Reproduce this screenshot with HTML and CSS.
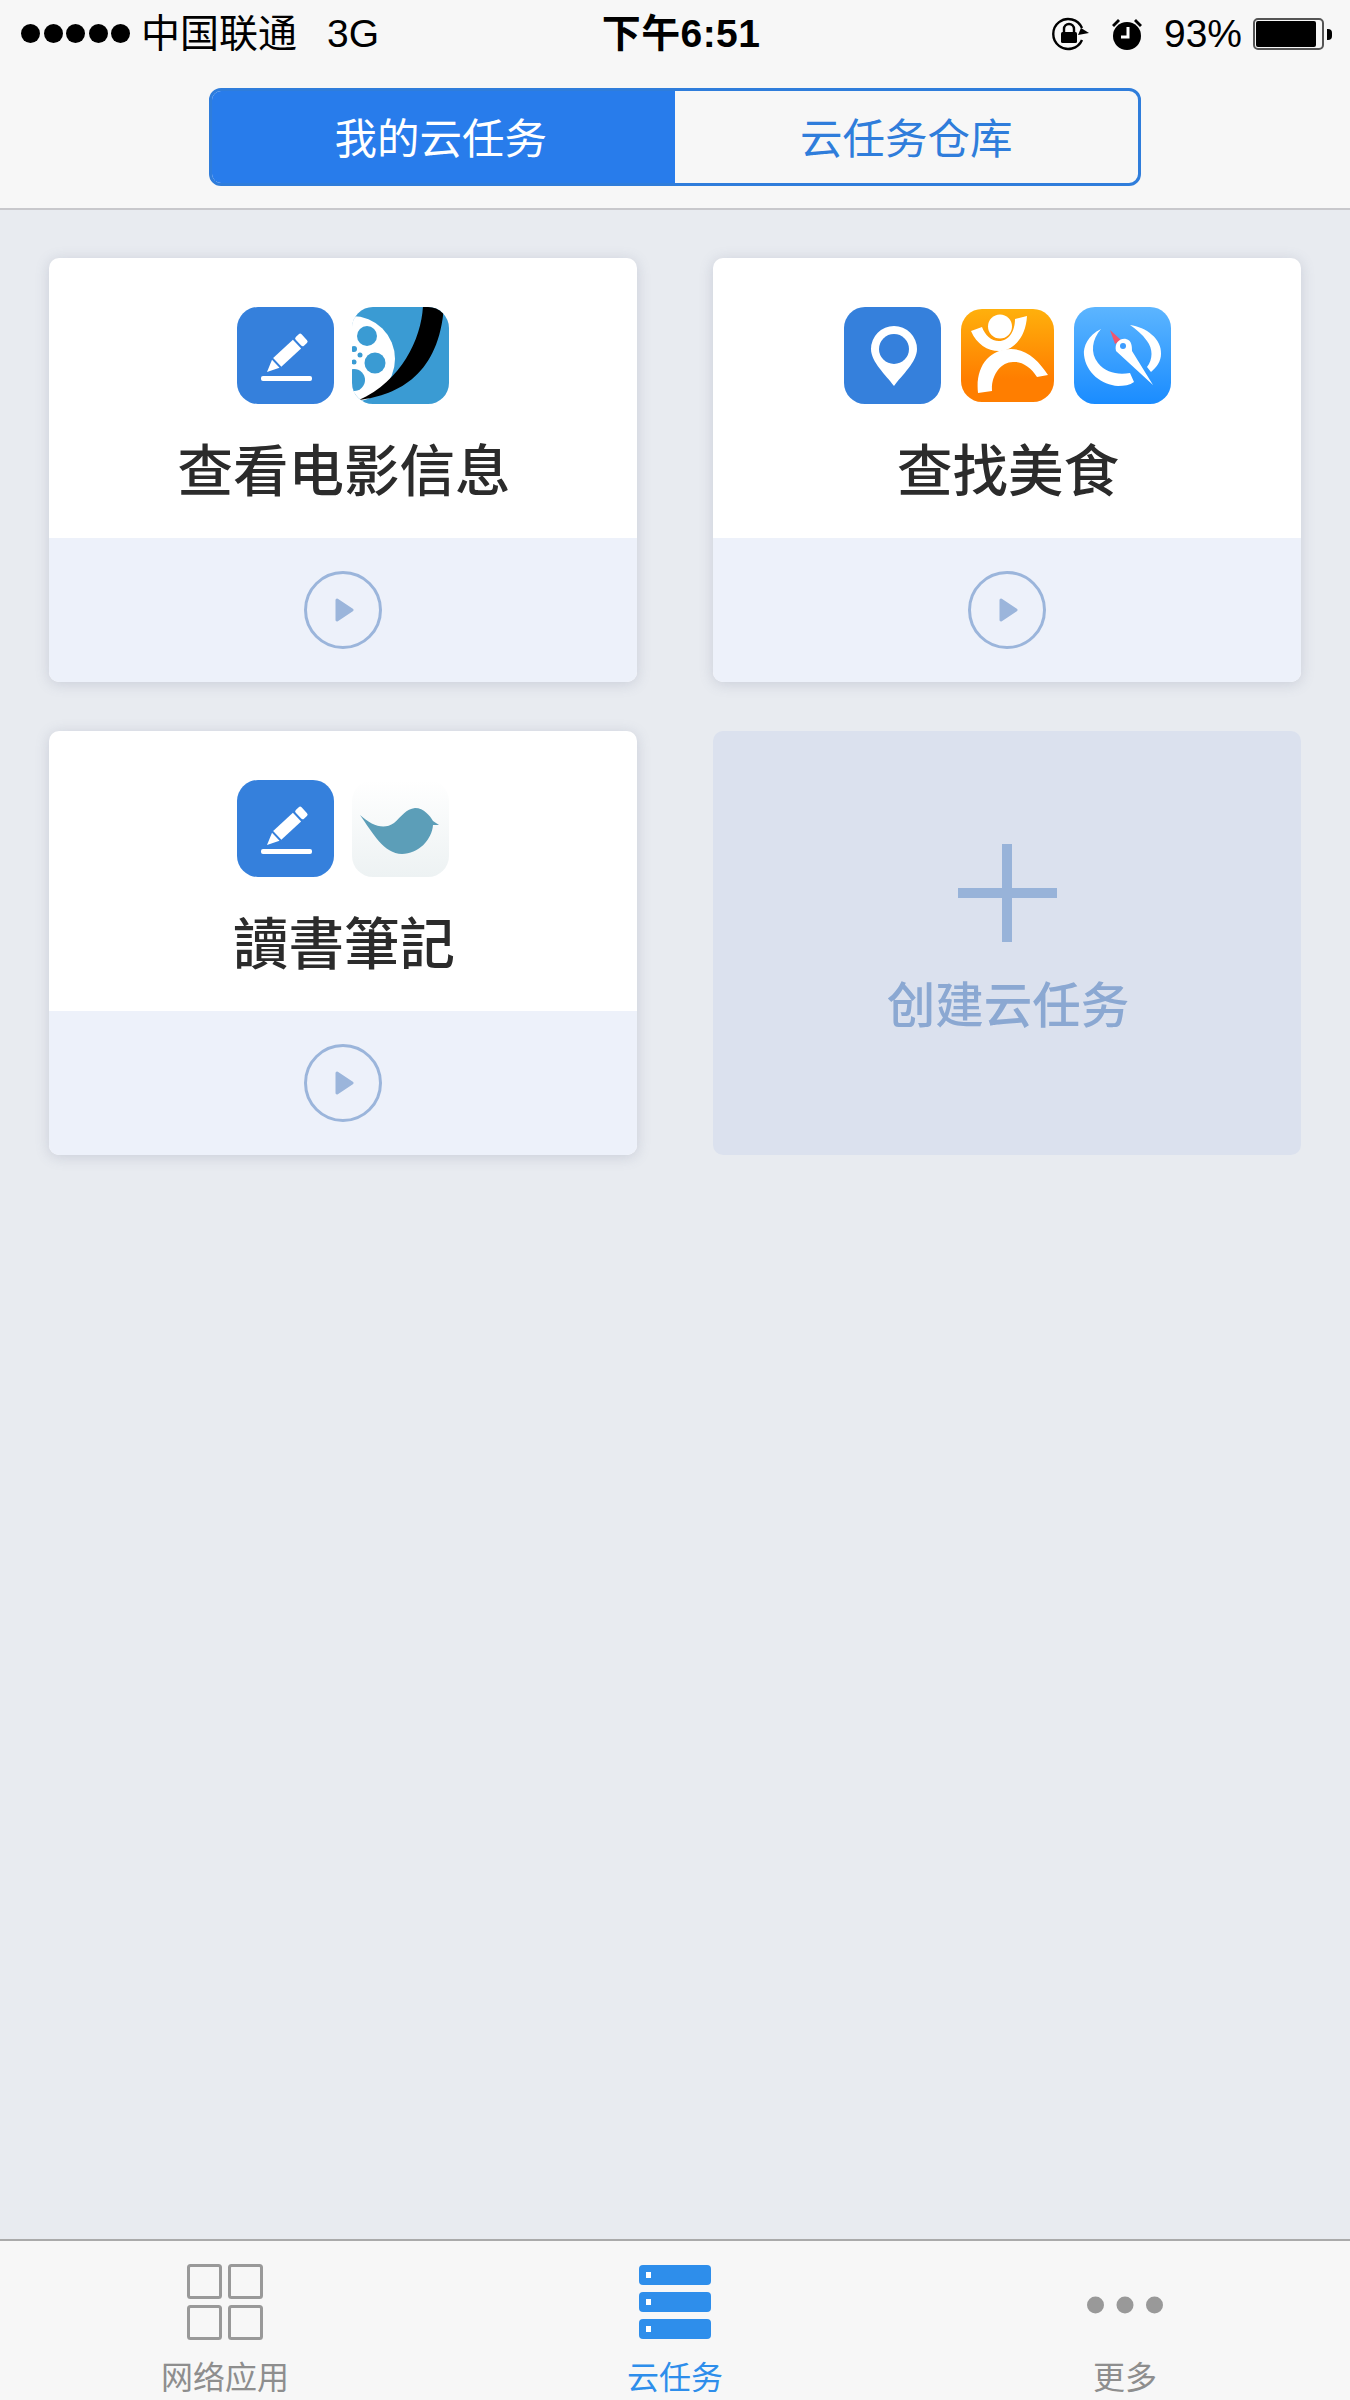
FILE: index.html
```html
<!DOCTYPE html>
<html lang="zh-CN">
  <head>
    <meta charset="UTF-8" />
    <meta name="viewport" content="width=device-width, initial-scale=1.0" />
    <title>云任务</title>
    <link rel="stylesheet" href="styles.css">
  </head>
  <body>
    <div class="app">
      <header class="top">
        <div class="status">
          <div class="status-left">
            <span class="signal"><i></i><i></i><i></i><i></i><i></i></span>
            <span class="carrier">中国联通</span>
            <span class="network">3G</span>
          </div>
          <div class="clock">下午6:51</div>
          <div class="status-right">
            <svg class="lock-icon" viewBox="0 0 38 34" width="38" height="34">
              <path d="M30 23 A15 15 0 1 1 30 11" fill="none" stroke="#000" stroke-width="2.4" />
              <path d="M29 11 L37 16 L26 18 Z" fill="#000" />
              <path d="M12 15 V12 A5 5 0 0 1 22 12 V15" fill="none" stroke="#000" stroke-width="2.4" />
              <rect x="9" y="15" width="16" height="11" rx="1.5" fill="#000" />
            </svg>
            <svg class="alarm-icon" viewBox="0 0 32 33" width="32" height="33">
              <circle cx="16" cy="18" r="14" fill="#000" />
              <path d="M17 9 V19 H10" fill="none" stroke="#fff" stroke-width="3" />
              <path d="M1 7 L7 1 L9 3 L3 9 Z M31 7 L25 1 L23 3 L29 9 Z" fill="#000" />
            </svg>
            <span class="battery-text">93%</span>
            <span class="battery"><span class="battery-fill"></span></span>
            <span class="battery-tip"></span>
          </div>
        </div>
        <div class="segment">
          <div class="segment-item active">我的云任务</div>
          <div class="segment-item">云任务仓库</div>
        </div>
      </header>

      <main class="tasks">
        <section class="card">
          <div class="card-body">
            <div class="apps">
              <svg class="app-icon" viewBox="0 0 97 97">
                <rect width="97" height="97" rx="21" fill="#3580dc" />
                <g transform="translate(30 65) rotate(47)" fill="#fff">
                  <path d="M0 0 L-5.5 -12 H5.5 Z" />
                  <rect x="-6" y="-41" width="12" height="27" />
                  <rect x="-6" y="-51" width="12" height="8" rx="2" />
                </g>
                <rect x="24" y="69" width="51" height="5" rx="2" fill="#fff" />
              </svg>
              <svg class="app-icon" viewBox="0 0 97 97">
                <defs>
                  <clipPath id="film-clip"><rect width="97" height="97" rx="21" /></clipPath>
                </defs>
                <g clip-path="url(#film-clip)">
                  <rect width="97" height="97" fill="#3a9bd3" />
                  <circle cx="0" cy="52" r="43" fill="#fff" />
                  <rect x="-1" y="0" width="4" height="97" fill="#fff" />
                  <circle cx="15" cy="29" r="10" fill="#3a9bd3" />
                  <circle cx="23" cy="56" r="10.5" fill="#3a9bd3" />
                  <circle cx="2" cy="73" r="11" fill="#3a9bd3" />
                  <circle cx="2" cy="42" r="3" fill="#3a9bd3" />
                  <circle cx="8" cy="48" r="2.5" fill="#3a9bd3" />
                  <circle cx="2" cy="55" r="2.5" fill="#3a9bd3" />
                  <path d="M71 -2 C70 30 50 74 7 93 C48 88 88 66 92 -2 Z" fill="#000" />
                </g>
              </svg>
            </div>
            <h2 class="card-title">查看电影信息</h2>
          </div>
          <div class="card-foot">
            <span class="play">
              <svg class="play-arrow" viewBox="0 0 19 24" width="19" height="24"><path d="M2 2 L17 12 L2 22 Z" fill="#9bb5db" stroke="#9bb5db" stroke-width="3" stroke-linejoin="round" /></svg>
            </span>
          </div>
        </section>

        <section class="card">
          <div class="card-body">
            <div class="apps wide">
              <svg class="app-icon" viewBox="0 0 97 97">
                <rect width="97" height="97" rx="21" fill="#3580dc" />
                <path d="M50 79 C42 68 27 55 27 42 A23 23 0 0 1 73 42 C73 55 58 68 50 79 Z" fill="#fff" />
                <circle cx="50" cy="42" r="15" fill="#3580dc" />
              </svg>
              <svg class="app-icon small" viewBox="0 0 93 93">
                <defs>
                  <linearGradient id="orange" x1="0" y1="0" x2="0" y2="1">
                    <stop offset="0" stop-color="#ffb00c" />
                    <stop offset="0.75" stop-color="#ff7e00" />
                  </linearGradient>
                </defs>
                <rect width="93" height="93" rx="21" fill="url(#orange)" />
                <circle cx="39" cy="17.5" r="12" fill="#fff" />
                <path d="M10 22 C16 36 28 43 40 42 C55 40 65 26 66 7 L54 10 C54 22 48 32 38 32 C30 32 24 26 21 18 Z" fill="#fff" />
                <path d="M17 84 C14 58 28 40 50 40 C66 40 78 52 87 66 L76 68 C70 58 60 52 52 53 C40 53 30 66 31 82 Z" fill="#fff" />
              </svg>
              <svg class="app-icon" viewBox="0 0 97 97">
                <defs>
                  <linearGradient id="sky" x1="0" y1="0" x2="0" y2="1">
                    <stop offset="0" stop-color="#5cb5ff" />
                    <stop offset="1" stop-color="#1a8cff" />
                  </linearGradient>
                </defs>
                <rect width="97" height="97" rx="21" fill="url(#sky)" />
                <path d="M27 22 C14 28 9 40 10 48 C12 66 28 78 44 79 C50 79 56 78 60 75 L56 66 C44 68 32 66 24 56 C16 46 18 32 27 22 Z" fill="#fff" />
                <path d="M56 18 C72 20 88 32 87 47 C87 54 83 60 77 65 L73 60 C79 52 79 42 73 34 C68 27 62 22 56 18 Z" fill="#fff" />
                <path d="M36 23 L47 33 L41 37 Z" fill="#f0566e" />
                <path d="M42 44 C40 36 46 31 52 32 C58 33 58 40 58 44 L79 78 Z" fill="#fff" />
                <circle cx="49" cy="39" r="3" fill="#3d9dff" />
              </svg>
            </div>
            <h2 class="card-title">查找美食</h2>
          </div>
          <div class="card-foot">
            <span class="play">
              <svg class="play-arrow" viewBox="0 0 19 24" width="19" height="24"><path d="M2 2 L17 12 L2 22 Z" fill="#9bb5db" stroke="#9bb5db" stroke-width="3" stroke-linejoin="round" /></svg>
            </span>
          </div>
        </section>

        <section class="card">
          <div class="card-body">
            <div class="apps">
              <svg class="app-icon" viewBox="0 0 97 97">
                <rect width="97" height="97" rx="21" fill="#3580dc" />
                <g transform="translate(30 65) rotate(47)" fill="#fff">
                  <path d="M0 0 L-5.5 -12 H5.5 Z" />
                  <rect x="-6" y="-41" width="12" height="27" />
                  <rect x="-6" y="-51" width="12" height="8" rx="2" />
                </g>
                <rect x="24" y="69" width="51" height="5" rx="2" fill="#fff" />
              </svg>
              <svg class="app-icon" viewBox="0 0 97 97">
                <defs>
                  <linearGradient id="mist" x1="0" y1="0" x2="0" y2="1">
                    <stop offset="0" stop-color="#fff" />
                    <stop offset="1" stop-color="#edf2f3" />
                  </linearGradient>
                </defs>
                <rect width="97" height="97" rx="21" fill="url(#mist)" />
                <path d="M8 35 C20 46 32 50 42 43 C50 36 54 29 63 28 C72 28 78 36 81 41 L87 45 L81 45 C80 60 66 74 50 74 C32 74 20 52 8 35 Z" fill="#5c9eb8" />
              </svg>
            </div>
            <h2 class="card-title" lang="zh-TW">讀書筆記</h2>
          </div>
          <div class="card-foot">
            <span class="play">
              <svg class="play-arrow" viewBox="0 0 19 24" width="19" height="24"><path d="M2 2 L17 12 L2 22 Z" fill="#9bb5db" stroke="#9bb5db" stroke-width="3" stroke-linejoin="round" /></svg>
            </span>
          </div>
        </section>

        <section class="card-add">
          <svg class="plus" viewBox="0 0 99 98" width="99" height="98">
            <rect x="44" y="0" width="10" height="98" fill="#98b3d9" />
            <rect x="0" y="44" width="99" height="10" fill="#98b3d9" />
          </svg>
          <div class="add-label">创建云任务</div>
        </section>
      </main>

      <nav class="tabs">
        <div class="tab">
          <svg class="tab-icon" viewBox="0 0 76 76" width="76" height="76">
            <g fill="none" stroke="#999" stroke-width="3">
              <rect x="1.5" y="1.5" width="32" height="32" rx="2" />
              <rect x="42.5" y="1.5" width="32" height="32" rx="2" />
              <rect x="1.5" y="42.5" width="32" height="32" rx="2" />
              <rect x="42.5" y="42.5" width="32" height="32" rx="2" />
            </g>
          </svg>
          <span class="tab-label">网络应用</span>
        </div>
        <div class="tab active">
          <svg class="tab-icon" viewBox="0 0 72 76" width="72" height="76">
            <rect x="0" y="1" width="72" height="20" rx="4" fill="#2e8eeb" />
            <rect x="0" y="28" width="72" height="20" rx="4" fill="#2e8eeb" />
            <rect x="0" y="55" width="72" height="20" rx="4" fill="#2e8eeb" />
            <rect x="7" y="8" width="5" height="6" fill="#fff" />
            <rect x="7" y="35" width="5" height="6" fill="#fff" />
            <rect x="7" y="62" width="5" height="6" fill="#fff" />
          </svg>
          <span class="tab-label">云任务</span>
        </div>
        <div class="tab">
          <svg class="tab-icon" viewBox="0 0 76 76" width="76" height="76">
            <circle cx="8.5" cy="41" r="8.5" fill="#999" />
            <circle cx="38" cy="41" r="8.5" fill="#999" />
            <circle cx="67.5" cy="41" r="8.5" fill="#999" />
          </svg>
          <span class="tab-label">更多</span>
        </div>
      </nav>
    </div>
  </body>
</html>
```
FILE: styles.css
```css
* {
  box-sizing: border-box;
}
body {
  margin: 0;
  font-family: "Liberation Sans", "Noto Sans CJK SC", sans-serif;
  background-color: #e8ebf0;
  color: #000;
}
.app {
  height: 2400px;
  display: flex;
  flex-direction: column;
  overflow: hidden;
}

/* top bar */
.top {
  height: 210px;
  flex: none;
  background-color: #f7f7f7;
  border-bottom: 2px solid #c8c8cc;
  padding-top: 14px;
}
.status {
  display: grid;
  grid-template-columns: 1fr auto 1fr;
  align-items: center;
  height: 40px;
  padding: 0 18px 0 21px;
  font-size: 39px;
  line-height: 40px;
}
.status-left {
  display: flex;
  align-items: center;
}
.signal {
  display: flex;
  gap: 3.5px;
  margin-right: 11px;
  margin-top: -2px;
}
.signal i {
  width: 19px;
  height: 19px;
  border-radius: 50%;
  background-color: #000;
}
.carrier {
  margin-right: 30px;
}
.clock {
  font-weight: 700;
  letter-spacing: 0.4px;
  margin-left: 9px;
}
.status-right {
  display: flex;
  align-items: center;
  justify-content: flex-end;
}
.lock-icon {
  margin-right: 21px;
}
.alarm-icon {
  margin-right: 21px;
}
.battery-text {
  margin-right: 11px;
}
.battery {
  display: block;
  width: 71px;
  height: 32px;
  border: 2px solid #555;
  border-radius: 5px;
  padding: 1px;
}
.battery-fill {
  display: block;
  width: 93%;
  height: 100%;
  background-color: #000;
  border-radius: 2px;
}
.battery-tip {
  width: 5px;
  height: 11px;
  margin-left: 3px;
  background-color: #000;
  border-radius: 0 4px 4px 0;
}

.segment {
  display: flex;
  width: 932px;
  height: 98px;
  margin: 34px auto 0;
  border: 3px solid #2f7ddb;
  border-radius: 12px;
  overflow: hidden;
}
.segment-item {
  flex: 1;
  display: flex;
  align-items: center;
  justify-content: center;
  padding-bottom: 4px;
  font-size: 42.5px;
  color: #2f7ddb;
}
.segment-item.active {
  margin: -3px 0 -3px -3px;
  padding-right: 2px;
  background-color: #287ceb;
  color: #fff;
}

/* cards */
.tasks {
  flex: 1;
  display: grid;
  grid-template-columns: 588px 588px;
  grid-auto-rows: 424px;
  align-content: start;
  column-gap: 76px;
  row-gap: 49px;
  padding: 48px 49px 0;
}
.card {
  display: flex;
  flex-direction: column;
  background-color: #fff;
  border-radius: 10px;
  overflow: hidden;
  box-shadow: 0 2px 14px rgba(90, 100, 130, 0.22);
}
.card-body {
  height: 280px;
  padding-top: 49px;
  text-align: center;
}
.apps {
  display: flex;
  justify-content: center;
  align-items: center;
  gap: 18px;
  height: 97px;
}
.apps.wide {
  gap: 20px;
}
.app-icon {
  width: 97px;
  height: 97px;
}
.app-icon.small {
  width: 93px;
  height: 93px;
}
.card-title {
  margin: 35px 0 0;
  padding-left: 2px;
  font-size: 55.5px;
  line-height: 66px;
  font-weight: 500;
  color: #2b2b2b;
}
.card-foot {
  flex: 1;
  display: flex;
  align-items: center;
  justify-content: center;
  background-color: #edf1fa;
}
.play {
  width: 78px;
  height: 78px;
  display: flex;
  align-items: center;
  justify-content: center;
  border: 3.5px solid #9bb5db;
  border-radius: 50%;
}
.play-arrow {
  display: block;
  margin-left: 2px;
}
.card-add {
  display: flex;
  flex-direction: column;
  align-items: center;
  padding-top: 113px;
  background-color: #dbe1ee;
  border-radius: 10px;
}
.add-label {
  margin-top: 35px;
  padding-left: 2px;
  font-size: 48.5px;
  line-height: 58px;
  font-weight: 500;
  color: #8ba8d2;
}

/* bottom tabs */
.tabs {
  height: 161px;
  flex: none;
  display: grid;
  grid-template-columns: repeat(3, 1fr);
  background-color: #f7f7f7;
  border-top: 2px solid #aaa;
  padding-top: 23px;
}
.tab {
  display: flex;
  flex-direction: column;
  align-items: center;
}
.tab-icon {
  display: block;
}
.tab-label {
  margin-top: 19px;
  font-size: 32px;
  line-height: 38px;
  color: #8e8e8e;
}
.tab.active .tab-label {
  color: #2e8eeb;
}
```
